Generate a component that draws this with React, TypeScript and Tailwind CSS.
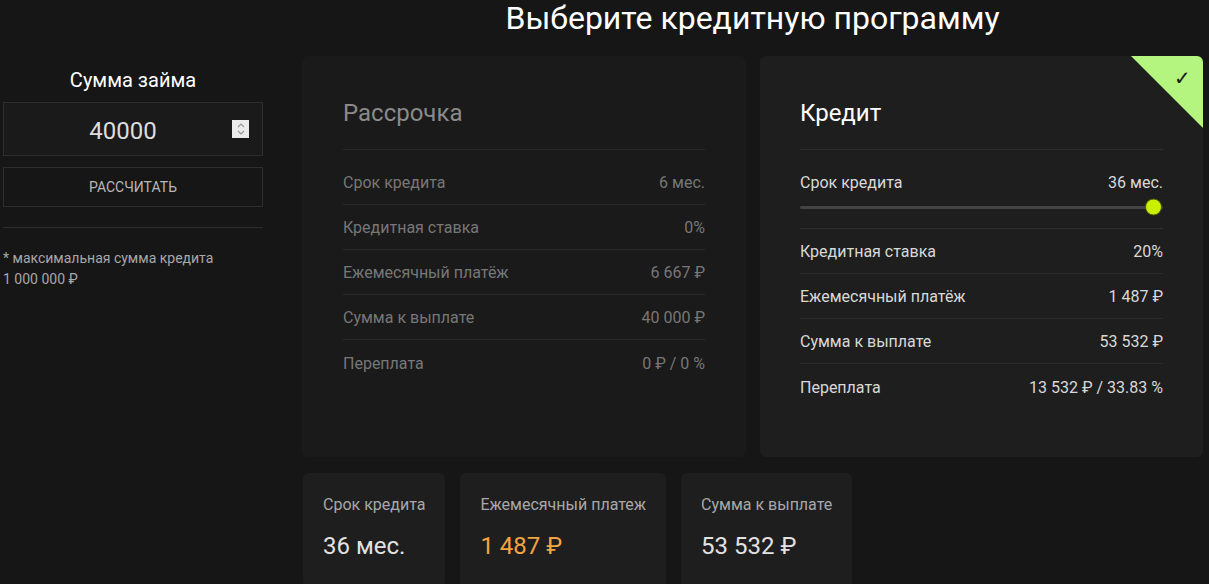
import React from "react";

const font = { fontFamily: "Roboto, 'Noto Sans', sans-serif" };

function Row({ label, value, dim, last }: { label: string; value: string; dim?: boolean; last?: boolean }) {
  return (
    <div
      className={`flex h-[45px] items-center justify-between pt-[2px] text-[16px] ${dim ? "text-[#777777]" : "text-[#d9d9d9]"} ${last ? "" : "border-b border-[#2a2a2a]"}`}
    >
      <span>{label}</span>
      <span>{value}</span>
    </div>
  );
}

export default function App() {
  return (
    <div className="min-h-[584px] w-full bg-[#161616] overflow-hidden" style={font}>
      <div className="flex">
        {/* left column */}
        <div className="ml-[3px] mt-[68px] w-[260px] shrink-0">
          <div className="text-center text-[20px] leading-[24px] text-white">Сумма займа</div>
          <div className="mt-[10px] flex h-[54px] items-center border border-[#2e2e2e] bg-[#1a1a1a]">
            <div className="flex-1 pl-[20px] pt-[3px] text-center text-[24px] text-[#dedede]">40000</div>
            <div className="mr-[13px] ml-[10px] flex h-[18px] w-[17px] flex-col items-center justify-center bg-[#ececec]">
              <svg width="10" height="14" viewBox="0 0 10 14" fill="none" stroke="#9a9a9a" strokeWidth="1.2">
                <path d="M2 5 L5 2 L8 5" />
                <path d="M2 9 L5 12 L8 9" />
              </svg>
            </div>
          </div>
          <div className="mt-[11px] flex h-[40px] items-center justify-center border border-[#2e2e2e] text-[14px] text-[#b8b8b8]">
            РАССЧИТАТЬ
          </div>
          <div className="mt-[20px] border-t border-[#2e2e2e]" />
          <div className="mt-[20px] text-[14px] leading-[21px] text-[#a8a8a8]">
            <div>* максимальная сумма кредита</div>
            <div>1 000 000 ₽</div>
          </div>
        </div>

        {/* right section */}
        <div className="ml-[39px] w-[901px] shrink-0">
          <h1 className="h-[36px] text-center text-[32px] leading-[36px] text-white">Выберите кредитную программу</h1>
          <div className="mt-[20px] flex gap-[14px]">
            {/* card 1 */}
            <div className="h-[401px] w-[444px] rounded-[6px] bg-[#1a1a1a] px-[41px] pt-[42px]">
              <div className="border-b border-[#2a2a2a] pb-[21px] text-[24px] leading-[30px] text-[#8a8a8a]">Рассрочка</div>
              <div className="mt-[10px]">
                <Row dim label="Срок кредита" value="6 мес." />
                <Row dim label="Кредитная ставка" value="0%" />
                <Row dim label="Ежемесячный платёж" value="6 667 ₽" />
                <Row dim label="Сумма к выплате" value="40 000 ₽" />
                <Row dim last label="Переплата" value="0 ₽ / 0 %" />
              </div>
            </div>
            {/* card 2 */}
            <div className="relative h-[401px] w-[443px] overflow-hidden rounded-[6px] bg-[#1e1e1e] px-[40px] pt-[42px]">
              <div className="absolute right-0 top-0 h-[72px] w-[72px] bg-[#b3f57e] [clip-path:polygon(0_0,100%_0,100%_100%)]" />
              <div className="absolute right-[12px] top-[10px] text-[20px] leading-[24px] text-[#1a1a1a]">✓</div>
              <div className="border-b border-[#2e2e2e] pb-[21px] text-[24px] leading-[30px] text-white">Кредит</div>
              <div className="mt-[10px]">
                <div className="border-b border-[#2e2e2e] pb-[18px]">
                  <div className="flex h-[44px] items-center justify-between pt-[2px] text-[16px] text-[#d9d9d9]">
                    <span>Срок кредита</span>
                    <span>36 мес.</span>
                  </div>
                  <div className="relative flex h-[6px] items-center">
                    <div className="h-[3px] w-full rounded bg-[#444444]" />
                    <div className="absolute right-[1px] top-1/2 h-[17px] w-[17px] -translate-y-1/2 rounded-full border border-[#4a5a00] bg-[#c8f000]" />
                  </div>
                </div>
                <Row label="Кредитная ставка" value="20%" />
                <Row label="Ежемесячный платёж" value="1 487 ₽" />
                <Row label="Сумма к выплате" value="53 532 ₽" />
                <Row last label="Переплата" value="13 532 ₽ / 33.83 %" />
              </div>
            </div>
          </div>

          {/* bottom cards */}
          <div className="ml-[1px] mt-[16px] flex gap-[15px]">
            {[
              { l: "Срок кредита", v: "36 мес.", c: "text-[#e2e2e2]" },
              { l: "Ежемесячный платеж", v: "1 487 ₽", c: "text-[#f4a342]" },
              { l: "Сумма к выплате", v: "53 532 ₽", c: "text-[#e2e2e2]" },
            ].map((b) => (
              <div key={b.l} className="h-[115px] rounded-[6px] bg-[#1e1e1e] px-[20px] pt-[21px]">
                <div className="text-[16px] leading-[22px] text-[#a8a8a8]">{b.l}</div>
                <div className={`mt-[15px] text-[24px] leading-[30px] ${b.c}`}>{b.v}</div>
              </div>
            ))}
          </div>
        </div>
      </div>
    </div>
  );
}
